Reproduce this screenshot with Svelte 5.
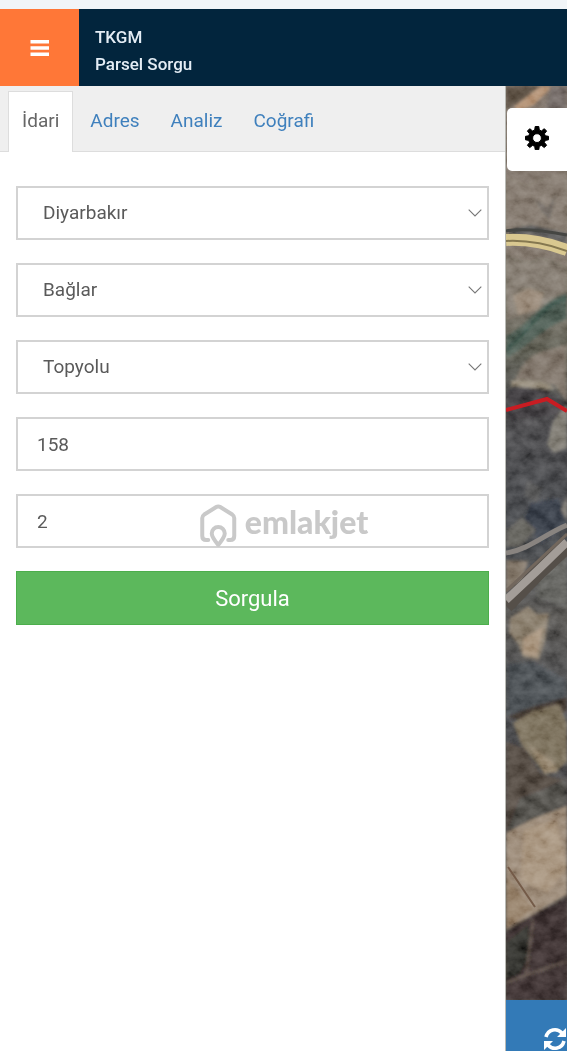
<script>
  let activeTab = $state('idari');
  let menuOpen = $state(true);

  let parcel = $state({
    city: 'Diyarbakır',
    district: 'Bağlar',
    quarter: 'Topyolu',
    block: '158',
    lot: '2',
  });

  const tabs = [
    { id: 'idari', title: 'İdari' },
    { id: 'adres', title: 'Adres' },
    { id: 'analiz', title: 'Analiz' },
    { id: 'cografi', title: 'Coğrafi' },
  ];

  const selects = [
    { id: 'city', label: 'İl', options: ['Diyarbakır'] },
    { id: 'district', label: 'İlçe', options: ['Bağlar'] },
    { id: 'quarter', label: 'Mahalle', options: ['Topyolu'] },
  ];

  const inputs = [
    { id: 'block', label: 'Ada' },
    { id: 'lot', label: 'Parsel' },
  ];

  function selectTab(event, id) {
    event.preventDefault();
    activeTab = id;
  }
</script>

<div class="page">
  <header>
    <button class="menu" aria-label="Menü" onclick={() => (menuOpen = !menuOpen)}>
      <svg width="20" height="16" viewBox="0 0 20 16">
        <path d="M.500 0h18.500v3.600H.500zM.500 6.200h18.500v3.600H.500zM.500 12.400h18.500V16H.500z" fill="#fff" />
      </svg>
    </button>
    <div class="brand">
      <span>TKGM</span>
      <span>Parsel Sorgu</span>
    </div>
  </header>

  <main>
    {#if menuOpen}
      <section class="sidebar">
        <nav>
          {#each tabs as tab}
            <a
              href="#{tab.id}"
              class="tab"
              class:active={activeTab === tab.id}
              onclick={(e) => selectTab(e, tab.id)}>{tab.title}</a
            >
          {/each}
        </nav>

        <form onsubmit={(e) => e.preventDefault()}>
          {#each selects as field}
            <div class="field">
              <select id={field.id} aria-label={field.label} bind:value={parcel[field.id]}>
                {#each field.options as option}
                  <option>{option}</option>
                {/each}
              </select>
              <svg class="arrow" width="14" height="8" viewBox="0 0 14 8">
                <path d="M.7 .7L7 7L13.3 .7" fill="none" stroke="#777" stroke-width="1.1" />
              </svg>
            </div>
          {/each}
          {#each inputs as field}
            <input id={field.id} type="text" aria-label={field.label} bind:value={parcel[field.id]} />
          {/each}
          <button class="submit" type="submit">Sorgula</button>
        </form>
      </section>
    {/if}

    <section class="mapArea">
      <div class="map">
        <svg class="terrain" viewBox="0 0 61 914" preserveAspectRatio="xMinYMin slice">
          <defs>
            <filter id="soft" x="-10%" y="-10%" width="120%" height="120%">
              <feGaussianBlur stdDeviation="1.4" />
            </filter>
            <filter id="grain" x="0" y="0" width="100%" height="100%">
              <feTurbulence type="fractalNoise" baseFrequency=".07 .09" numOctaves="4" seed="7" />
              <feColorMatrix values="1 0 0 0 -.1  1 0 0 0 -.1  1 0 0 0 -.1  0 0 0 0 1" />
            </filter>
            <linearGradient id="ground" x1="0" y1="0" x2="0" y2="1">
              <stop offset="0" stop-color="#766a60" />
              <stop offset=".2" stop-color="#7b7065" />
              <stop offset=".29" stop-color="#57574c" />
              <stop offset=".36" stop-color="#434244" />
              <stop offset=".5" stop-color="#3d4044" />
              <stop offset=".58" stop-color="#504e4b" />
              <stop offset=".68" stop-color="#424346" />
              <stop offset="1" stop-color="#443d38" />
            </linearGradient>
          </defs>
          <rect width="61" height="914" fill="url(#ground)" />
          <g filter="url(#soft)">
            <path d="M0 0h40L24 12L0 24z" fill="#514437" />
            <path d="M8 21L35 0h12L28 19L12 25z" fill="#ae8a6c" />
            <path d="M44 0h17v24H40z" fill="#69615b" />
            <path d="M0 88L20 98L61 82V146L25 144L0 148z" fill="#7e7368" />
            <path d="M28 112L42 122L50 108L44 134L36 126z" fill="#655d56" />
            <path d="M8 142L25 139L61 147V157L24 148L0 151z" fill="#494a4a" />
            <path d="M0 168L22 175L36 170L61 179V214L30 226L0 234z" fill="#7c7368" />
            <path d="M7 210L22 202L38 207L33 223L12 229z" fill="#938372" />
            <path d="M61 207C34 214 20 242 0 250V272C18 264 37 241 61 233z" fill="#47564d" />
            <path d="M61 212C36 218 25 244 0 264" stroke="#304a41" stroke-width="4" fill="none" />
            <path d="M8 304C8 282 27 265 41 264L61 258V316L48 299L7 300z" fill="#746b5f" />
            <path d="M5 294L37 296L50 303L36 304L5 301z" fill="#918776" />
            <path d="M7 300L38 303L61 318V328L0 335V306z" fill="#3a393b" />
            <path d="M61 318L47 335L41 359L48 367L61 362z" fill="#77736a" />
            <path d="M21 394L36 402L31 417L18 410z" fill="#4c4b4c" />
            <path d="M25 417L53 412L61 439L35 457L18 434z" fill="#333842" />
            <path d="M61 410L55 424L61 434z" fill="#756f68" />
            <path d="M0 444L16 431L30 444L15 461H0z" fill="#5d5b57" />
            <path d="M0 474L22 475L17 493L0 506z" fill="#7a6e60" />
            <path d="M31 493L61 462V522L30 512z" fill="#5c5b58" />
            <path d="M4 532L22 520L31 528L43 527L39 555L33 574L17 571L12 558L3 547z" fill="#817564" />
            <path d="M17 553L37 541L31 571L17 568z" fill="#a08b73" />
            <path d="M0 578L28 576L61 594V611L20 625L0 632z" fill="#42464b" />
            <path d="M0 631L28 620L61 611V626L20 635z" fill="#3a302b" />
            <path d="M7 637L27 625L53 618L61 637V676L50 686L38 687L15 658z" fill="#736753" />
            <path d="M25 661L46 675L52 686L38 688z" fill="#93836c" />
            <path d="M0 656L18 662L35 688L59 694L43 719L0 745z" fill="#493f39" />
            <path d="M14 712L34 705L61 692V724L18 742L0 748z" fill="#4a4743" />
            <path d="M0 747L27 733L61 720V809L41 820L0 844z" fill="#958370" />
            <path d="M18 744L50 734L61 782L42 806L15 795z" fill="#a18d76" />
            <path d="M0 791L27 822L0 843z" fill="#8d775f" />
            <path d="M0 846L27 828L61 812V914H0z" fill="#342a29" />
            <path d="M0 857L22 839L25 868L13 888L0 893z" fill="#292927" />
            <path d="M0 897L15 891L61 875M27 835L20 889" stroke="#5a4b43" stroke-width="2" fill="none" />
          </g>
          <rect class="noise" width="61" height="914" filter="url(#grain)" />
          <path d="M0 145Q20 141 61 149" fill="none" stroke="#454643" stroke-width="3" />
          <path d="M0 154C20 153 39 156 61 164" fill="none" stroke="#d9c890" stroke-width="12" />
          <path d="M0 155C20 154 39 157 61 165" fill="none" stroke="#857850" stroke-width="2" />
          <path d="M0 467C22 464 39 448 61 439" fill="none" stroke="#898480" stroke-width="5" />
          <path d="M0 520L32 487L61 460" fill="none" stroke="#554f49" stroke-width="15" />
          <path d="M0 514L32 484L61 456" fill="none" stroke="#a39d98" stroke-width="8" />
          <path d="M0 505L61 448" fill="none" stroke="#72675d" stroke-width="3" />
          <path d="M2 781L29 821" fill="none" stroke="#745b48" stroke-width="2" />
          <path d="M0 324L41 313L61 325" fill="none" stroke="#c91c22" stroke-width="4" />
        </svg>
        <button class="settings" aria-label="Ayarlar">
          <svg width="24" height="24" viewBox="0 0 24 24">
            <path
              fill="#000"
              stroke="#000"
              stroke-linejoin="round"
              fill-rule="evenodd"
              d="M10.200 .5h3.600l.5 3.500 2.200.9L19.300 2.700l2.300 2.400-2.200 2.700.9 2 3.200.5v3.500l-3.200.6-.9 2.100 2.200 2.700-2.300 2.400-2.800-2.200-2.200.9-.5 3.400h-3.600l-.5-3.400-2.200-.9-2.800 2.200-2.300-2.400 2.200-2.700-.9-2.100-3.200-.6v-3.500l3.200-.5.9-2L2.400 5.100l2.300-2.400 2.800 2.200 2.200-.9zM12 7.700a4.400 4.400 0 1 0 0 8.800 4.400 4.400 0 0 0 0-8.800z"
            />
          </svg>
        </button>
      </div>
      <button class="refresh" aria-label="Yenile">
        <svg width="24" height="24" viewBox="0 0 24 24">
          <path d="M3 10C5 2 14 .5 19 6M21 14C19 22 10 23.500 5 18" fill="none" stroke="#fff" stroke-width="3.600" />
          <path d="M23 1v9h-9zM1 23v-9h9z" fill="#fff" />
        </svg>
      </button>
    </section>
  </main>

  <div class="watermark">
    <svg width="38" height="44" viewBox="0 0 38 44">
      <g fill="none" stroke="#c9c9c9" stroke-width="4" stroke-linejoin="round" stroke-linecap="round">
        <path d="M9 36H7Q3 36 3 32V14Q3 12 5 10.500L17 3Q19 1.800 21 3L33 10.500Q35 12 35 14V32Q35 36 31 36H29" />
        <path d="M19 41Q12.500 33 12.500 29.500A6.500 6.500 0 0 1 25.500 29.500Q25.500 33 19 41z" />
      </g>
    </svg>
    <span>emlakjet</span>
  </div>
</div>

<style>
  :global(body) {
    margin: 0;
  }

  .page {
    position: relative;
    display: flex;
    flex-direction: column;
    height: 100vh;
    min-height: 660px;
    overflow: hidden;
    background-color: #fff;
    font-family: Roboto, 'Liberation Sans', sans-serif;
    font-size: 19px;
    color: #555;
  }

  button,
  input,
  select {
    box-sizing: border-box;
    margin: 0;
    border: none;
    border-radius: 0;
    font: inherit;
    color: inherit;
  }

  button {
    padding: 0;
    cursor: pointer;
  }

  svg {
    display: block;
    flex-shrink: 0;
  }

  header {
    display: flex;
    flex-shrink: 0;
    height: 77px;
    border-top: 9px solid #f1f5f8;
    background-color: #02253d;
  }

  .menu {
    display: flex;
    align-items: center;
    justify-content: center;
    width: 79px;
    background-color: #ff7737;
  }

  .brand {
    display: flex;
    flex-direction: column;
    justify-content: center;
    padding: 6px 16px 0;
    font-size: 17px;
    font-weight: 500;
    line-height: 27px;
    color: #e4edf5;
  }

  main {
    display: flex;
    flex: 1;
    min-height: 0;
  }

  .sidebar {
    flex: 1;
    border-right: 1px solid #b9bab5;
  }

  nav {
    display: flex;
    gap: 3px;
    padding: 5px 8px 0;
    border-bottom: 1px solid #ddd;
    background-color: #efefef;
  }

  .tab {
    padding: 0 13px 2px;
    border: 1px solid transparent;
    border-bottom: none;
    line-height: 57px;
    color: #3f80bd;
    text-decoration: none;
  }

  .tab.active {
    margin-bottom: -1px;
    padding-bottom: 3px;
    border-color: #ddd;
    background-color: #fff;
    color: #666;
  }

  form {
    display: flex;
    flex-direction: column;
    gap: 23px;
    padding: 34px 16px;
  }

  .field {
    position: relative;
  }

  select,
  input {
    display: block;
    width: 100%;
    height: 54px;
    border: 2px solid #d3d3d3;
    background-color: #fff;
    color: #5a5a5a;
  }

  input {
    padding: 0 19px;
  }

  select {
    appearance: none;
    padding: 0 25px 2px;
  }

  .arrow {
    position: absolute;
    top: 23px;
    right: 7px;
    pointer-events: none;
  }

  .submit {
    height: 54px;
    border: 1px solid #4cae4c;
    background-color: #5cb85c;
    color: #fff;
    font-size: 22px;
  }

  .mapArea {
    display: flex;
    flex-direction: column;
    width: 61px;
  }

  .map {
    position: relative;
    flex: 1;
    min-height: 0;
    overflow: hidden;
    background-color: #443d38;
  }

  .terrain {
    width: 100%;
    height: 100%;
  }

  .noise {
    mix-blend-mode: soft-light;
    opacity: 0.7;
  }

  .settings {
    position: absolute;
    top: 22px;
    left: 1px;
    right: 0;
    display: flex;
    align-items: center;
    justify-content: center;
    height: 63px;
    padding-bottom: 3px;
    border-radius: 5px 0 0 5px;
    background-color: #fff;
  }

  .refresh {
    display: flex;
    align-items: flex-end;
    justify-content: flex-end;
    height: 51px;
    background-color: #337ab7;
  }

  .watermark {
    position: absolute;
    top: 50%;
    left: 50%;
    display: flex;
    align-items: flex-start;
    gap: 8px;
    transform: translate(-50%, -50%);
    color: #c9c9c9;
    font-family: Lato, 'Open Sans', sans-serif;
    font-size: 32px;
    font-weight: 900;
    line-height: 36px;
    pointer-events: none;
  }
</style>
